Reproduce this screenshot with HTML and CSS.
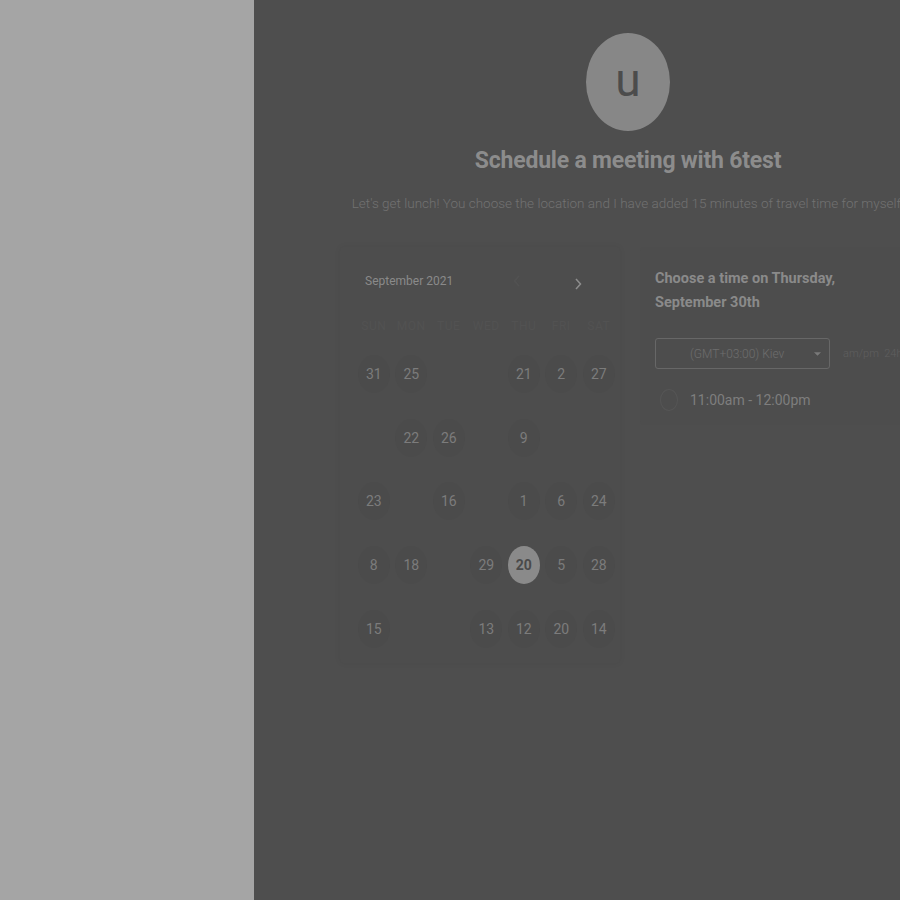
FILE: index.html
```html
<!DOCTYPE html>
<html>
<head>
<meta charset="utf-8">
<link rel="stylesheet" href="styles.css">
</head>
<body>
<div class="page">
  <aside class="sidebar"></aside>
  <main class="main">
    <div class="avatar">u</div>
    <h1 class="title">Schedule a meeting with 6test</h1>
    <p class="desc">Let's get lunch! You choose the location and I have added 15 minutes of travel time for myself.</p>
    <div class="cards">
      <section class="calendar">
        <div class="cal-head">
          <span class="month">September 2021</span>
          <span class="nav">
            <svg class="arrow prev" width="8" height="12" viewBox="0 0 8 12"><path d="M6 1 L1.5 6 L6 11" fill="none" stroke="currentColor" stroke-width="1.5"/></svg>
            <svg class="arrow next" width="8" height="12" viewBox="0 0 8 12"><path d="M2 1 L6.5 6 L2 11" fill="none" stroke="currentColor" stroke-width="1.5"/></svg>
          </span>
        </div>
        <div class="weekdays">
          <span>SUN</span><span>MON</span><span>TUE</span><span>WED</span><span>THU</span><span>FRI</span><span>SAT</span>
        </div>
        <div class="days">
          <span class="day">31</span><span class="day">25</span><span></span><span></span><span class="day">21</span><span class="day">2</span><span class="day">27</span>
          <span></span><span class="day">22</span><span class="day">26</span><span></span><span class="day">9</span><span></span><span></span>
          <span class="day">23</span><span></span><span class="day">16</span><span></span><span class="day">1</span><span class="day">6</span><span class="day">24</span>
          <span class="day">8</span><span class="day">18</span><span></span><span class="day">29</span><span class="day selected">20</span><span class="day">5</span><span class="day">28</span>
          <span class="day">15</span><span></span><span></span><span class="day">13</span><span class="day">12</span><span class="day">20</span><span class="day">14</span>
        </div>
      </section>
      <section class="times">
        <h2 class="times-title">Choose a time on Thursday, September 30th</h2>
        <div class="tz-row">
          <div class="tz-select">
            <span>(GMT+03:00) Kiev</span>
            <svg class="caret" width="7" height="4" viewBox="0 0 8 4"><path d="M0 0 L8 0 L4 4 Z" fill="currentColor"/></svg>
          </div>
          <span class="format">am/pm&nbsp; 24h</span>
        </div>
        <label class="slot">
          <span class="radio"></span>
          <span class="slot-text">11:00am - 12:00pm</span>
        </label>
      </section>
    </div>
  </main>
</div>
</body>
</html>
```

FILE: styles.css
```css
html, body {
  margin: 0;
  padding: 0;
  height: 100%;
  overflow: hidden;
  background: #4e4e4e;
}
body {
  font-family: Roboto, "Liberation Sans", sans-serif;
}
.page {
  display: flex;
  width: 1002px;
  height: 900px;
}
.sidebar {
  width: 254px;
  flex-shrink: 0;
  background: #a5a5a5;
}
.main {
  width: 748px;
  flex-shrink: 0;
  background: #4e4e4e;
  display: flex;
  flex-direction: column;
  align-items: center;
  padding-top: 33px;
  box-sizing: border-box;
}
.avatar {
  width: 84px;
  height: 98px;
  border-radius: 50%;
  background: #878787;
  color: #4c4c4c;
  font-size: 46px;
  display: flex;
  align-items: center;
  justify-content: center;
  line-height: 1;
  padding-bottom: 4px;
  box-sizing: border-box;
}
.title {
  margin: 16px 0 0;
  font-size: 23px;
  font-weight: 700;
  color: #8c8c8c;
  line-height: 28px;
  letter-spacing: -0.2px;
}
.desc {
  margin: 19px 0 0;
  font-size: 13.5px;
  font-weight: 300;
  color: #727272;
  white-space: nowrap;
  line-height: 18px;
}
.cards {
  display: flex;
  gap: 20px;
  margin-top: 35px;
  width: 576px;
  align-items: flex-start;
}
.calendar {
  width: 280px;
  flex-shrink: 0;
  background: #4d4d4d;
  border-radius: 4px;
  box-shadow: 0 0 6px rgba(0,0,0,0.06);
  padding: 22px 3px 2px 15px;
  box-sizing: border-box;
}
.cal-head {
  display: flex;
  align-items: center;
  justify-content: space-between;
  padding: 0 35px 0 10px;
  height: 24px;
}
.month {
  font-size: 12px;
  color: #8a8a8a;
}
.nav {
  display: flex;
  gap: 53px;
  align-items: center;
}
.arrow.prev { color: #525252; }
.arrow.next { color: #8e8e8e; margin-top: 6px; }
.weekdays {
  display: grid;
  grid-template-columns: repeat(7, 37.5px);
  margin-top: 26px;
  font-size: 12px;
  color: #525252;
  text-align: center;
  letter-spacing: 0.5px;
}
.days {
  display: grid;
  grid-template-columns: repeat(7, 37.5px);
  grid-auto-rows: 63.75px;
  margin-top: 9px;
  justify-items: center;
  align-items: center;
}
.day {
  width: 32px;
  height: 38px;
  border-radius: 50%;
  background: #4b4b4b;
  color: #7c7c7c;
  font-size: 14px;
  display: flex;
  align-items: center;
  justify-content: center;
}
.day.selected {
  background: #8a8a8a;
  color: #4a4a4a;
  font-weight: 700;
}
.times {
  width: 276px;
  flex-shrink: 0;
  background: #4d4d4d;
  border-radius: 4px;
  padding: 20px 0 14px 15px;
  box-sizing: border-box;
  min-height: 175px;
}
.times-title {
  margin: 0;
  font-size: 14.5px;
  font-weight: 700;
  color: #8a8a8a;
  line-height: 24px;
  width: 200px;
}
.tz-row {
  display: flex;
  align-items: center;
  gap: 13px;
  margin-top: 23px;
}
.tz-select {
  width: 175px;
  height: 31px;
  border: 1px solid #676767;
  border-radius: 3px;
  box-sizing: border-box;
  display: flex;
  align-items: center;
  justify-content: space-between;
  padding: 0 8px 0 34px;
  font-size: 12px;
  font-weight: 300;
  color: #6e6e6e;
}
.caret { color: #7a7a7a; }
.format {
  font-size: 11px;
  font-weight: 300;
  color: #5f5f5f;
  white-space: nowrap;
}
.slot {
  display: flex;
  align-items: center;
  gap: 12px;
  margin-top: 20px;
  padding-left: 5px;
}
.radio {
  width: 18px;
  height: 22px;
  border-radius: 50%;
  border: 1px solid #555555;
  box-sizing: border-box;
}
.slot-text {
  font-size: 14px;
  color: #7e7e7e;
}
```
